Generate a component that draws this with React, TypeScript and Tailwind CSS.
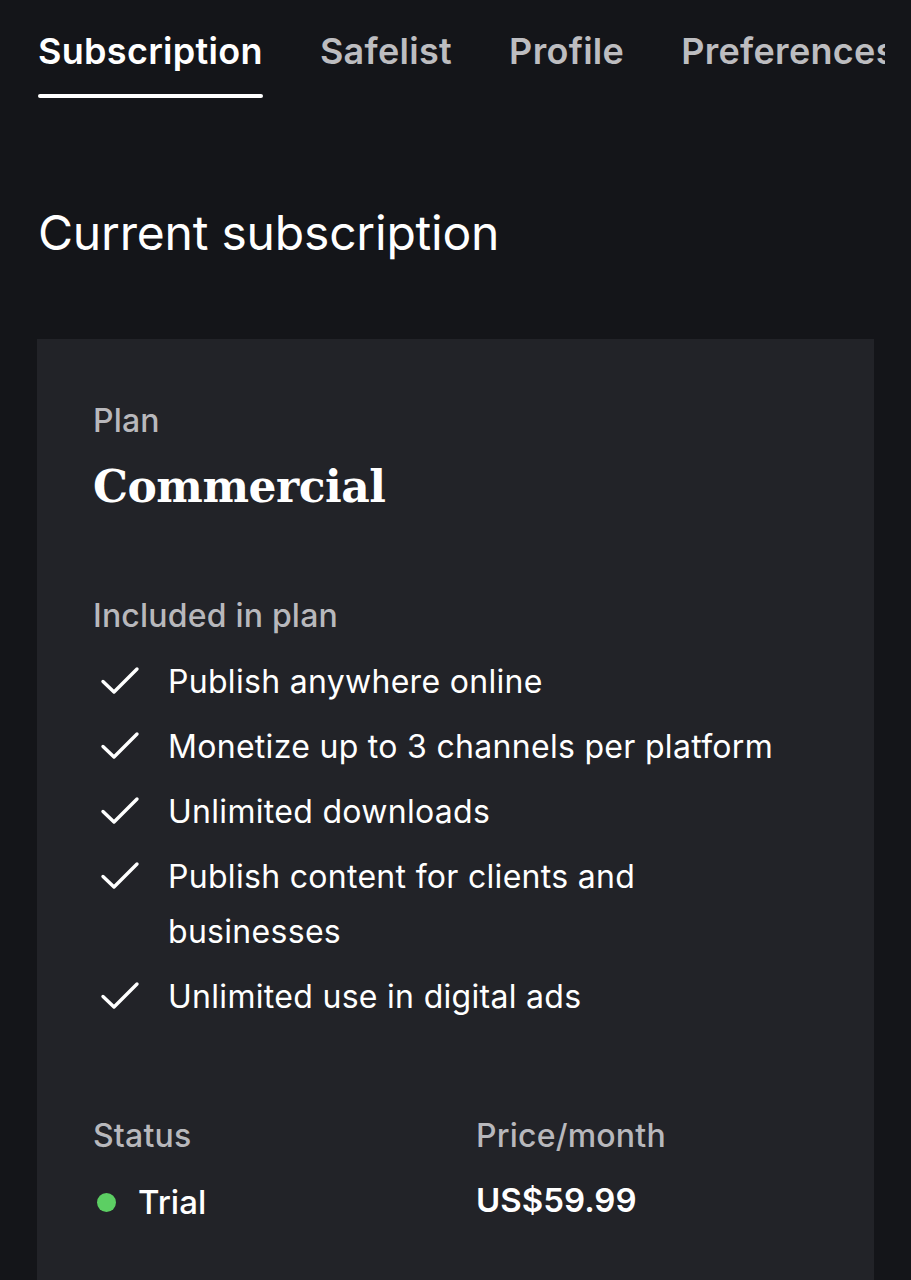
import * as React from "react";

const TABS = ["Subscription", "Safelist", "Profile", "Preferences"];

const FEATURES = [
  "Publish anywhere online",
  "Monetize up to 3 channels per platform",
  "Unlimited downloads",
  "Publish content for clients and businesses",
  "Unlimited use in digital ads",
];

function CheckIcon() {
  return (
    <svg viewBox="0 0 40 30" className="h-[30px] w-[40px] shrink-0" fill="none">
      <path
        d="M3 15.5 L14 26 L37 3"
        stroke="white"
        strokeWidth="3.4"
        strokeLinecap="round"
        strokeLinejoin="round"
      />
    </svg>
  );
}

export default function App() {
  const [active, setActive] = React.useState("Subscription");

  return (
    <div className="min-h-[1280px] overflow-hidden bg-[#141519] font-['Inter',sans-serif] text-white">
      {/* Tabs, clipped at the right edge like a scroll strip */}
      <div className="w-[885px] overflow-hidden">
        <nav className="flex gap-[57px] whitespace-nowrap pl-[38px] pt-[29px]">
          {TABS.map((tab) => (
            <button
              key={tab}
              onClick={() => setActive(tab)}
              className={[
                "relative pb-[25px] text-[36px] font-semibold leading-[44px] tracking-[0.3px]",
                active === tab ? "text-white" : "text-[#bdbdc0]",
              ].join(" ")}
            >
              {tab}
              {active === tab && (
                <span className="absolute bottom-0 left-0 right-0 h-[4px] rounded-full bg-white" />
              )}
            </button>
          ))}
        </nav>
      </div>

      <h1 className="pl-[38px] pt-[107px] text-[48px] font-normal leading-[56px] tracking-[-0.2px]">
        Current subscription
      </h1>

      <section className="mx-[37px] mt-[78px] min-h-[950px] bg-[#222328] px-[56px] pt-[62px]">
        <p className="text-[32px] font-medium leading-[40px] tracking-[0.2px] text-[#b8b8bc]">Plan</p>
        <p className="mt-[20px] font-['DejaVu_Serif',serif] text-[44px] font-semibold leading-[52px] tracking-[-0.5px]">
          Commercial
        </p>

        <p className="mt-[83px] text-[32px] font-medium leading-[40px] tracking-[0.2px] text-[#b8b8bc]">
          Included in plan
        </p>
        <ul className="mt-[18px] flex flex-col gap-[10px]">
          {FEATURES.map((f) => (
            <li key={f} className="flex items-start gap-[28px] pl-[7px]">
              <span className="pt-[12px]">
                <CheckIcon />
              </span>
              <span className="max-w-[620px] text-[32px] leading-[55px] tracking-[0.3px]">{f}</span>
            </li>
          ))}
        </ul>

        <div className="mt-[92px] grid grid-cols-[383px_1fr]">
          <div>
            <p className="text-[32px] font-medium leading-[40px] tracking-[0.2px] text-[#b8b8bc]">Status</p>
            <div className="mt-[26px] flex items-center gap-[22px] pl-[4px]">
              <span className="h-[19px] w-[19px] rounded-full bg-[#5ccf63]" />
              <span className="text-[33px] font-medium leading-[40px]">Trial</span>
            </div>
          </div>
          <div>
            <p className="text-[32px] font-medium leading-[40px] tracking-[0.2px] text-[#b8b8bc]">Price/month</p>
            <p className="mt-[24px] text-[33px] font-semibold leading-[40px]">US$59.99</p>
          </div>
        </div>
      </section>
    </div>
  );
}
